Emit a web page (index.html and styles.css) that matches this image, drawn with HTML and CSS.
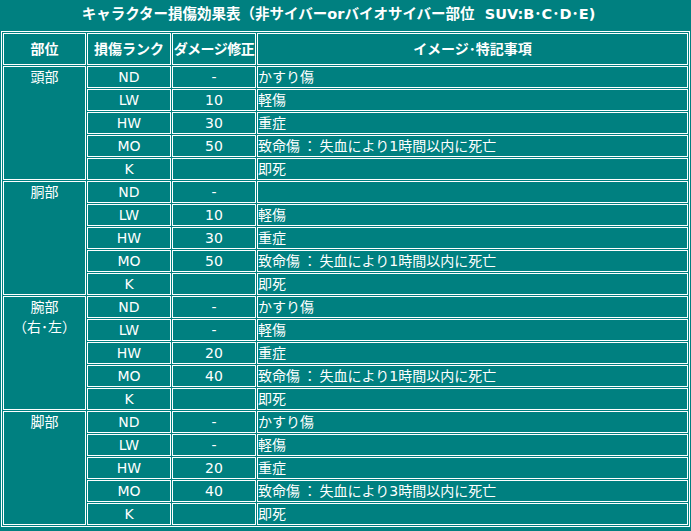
FILE: index.html
```html
<!DOCTYPE html>
<html lang="ja">
<head>
<meta charset="utf-8">
<title>キャラクター損傷効果表</title>
<link rel="stylesheet" href="styles.css">
</head>
<body>
<div class="title">キャラクター損傷効果表（非サイバーorバイオサイバー部位&nbsp;&nbsp;SUV:B･C･D･E)</div>
<table class="dmg">
  <thead>
    <tr>
      <th class="c1">部位</th>
      <th class="c2">損傷ランク</th>
      <th class="c3">ダメージ修正</th>
      <th class="c4">イメージ･特記事項</th>
    </tr>
  </thead>
  <tbody>
    <tr><td class="part" rowspan="5">頭部</td><td class="ctr">ND</td><td class="ctr">-</td><td class="note">かすり傷</td></tr>
    <tr><td class="ctr">LW</td><td class="ctr">10</td><td class="note">軽傷</td></tr>
    <tr><td class="ctr">HW</td><td class="ctr">30</td><td class="note">重症</td></tr>
    <tr><td class="ctr">MO</td><td class="ctr">50</td><td class="note">致命傷<span class="fw">：</span>失血により1時間以内に死亡</td></tr>
    <tr><td class="ctr">K</td><td class="ctr"></td><td class="note">即死</td></tr>

    <tr><td class="part" rowspan="5">胴部</td><td class="ctr">ND</td><td class="ctr">-</td><td class="note"></td></tr>
    <tr><td class="ctr">LW</td><td class="ctr">10</td><td class="note">軽傷</td></tr>
    <tr><td class="ctr">HW</td><td class="ctr">30</td><td class="note">重症</td></tr>
    <tr><td class="ctr">MO</td><td class="ctr">50</td><td class="note">致命傷<span class="fw">：</span>失血により1時間以内に死亡</td></tr>
    <tr><td class="ctr">K</td><td class="ctr"></td><td class="note">即死</td></tr>

    <tr><td class="part" rowspan="5">腕部<br>（右･左）</td><td class="ctr">ND</td><td class="ctr">-</td><td class="note">かすり傷</td></tr>
    <tr><td class="ctr">LW</td><td class="ctr">-</td><td class="note">軽傷</td></tr>
    <tr><td class="ctr">HW</td><td class="ctr">20</td><td class="note">重症</td></tr>
    <tr><td class="ctr">MO</td><td class="ctr">40</td><td class="note">致命傷<span class="fw">：</span>失血により1時間以内に死亡</td></tr>
    <tr><td class="ctr">K</td><td class="ctr"></td><td class="note">即死</td></tr>

    <tr><td class="part" rowspan="5">脚部</td><td class="ctr">ND</td><td class="ctr">-</td><td class="note">かすり傷</td></tr>
    <tr><td class="ctr">LW</td><td class="ctr">-</td><td class="note">軽傷</td></tr>
    <tr><td class="ctr">HW</td><td class="ctr">20</td><td class="note">重症</td></tr>
    <tr><td class="ctr">MO</td><td class="ctr">40</td><td class="note">致命傷<span class="fw">：</span>失血により3時間以内に死亡</td></tr>
    <tr><td class="ctr">K</td><td class="ctr"></td><td class="note">即死</td></tr>
  </tbody>
</table>
</body>
</html>
```

FILE: styles.css
```css
html, body {
  margin: 0;
  padding: 0;
  background: #008080;
}
body {
  padding: 0 1px;
  color: #ffffff;
  font-family: "DejaVu Sans", "Noto Sans CJK JP", sans-serif;
  font-size: 14px;
}
.title {
  height: 31px;
  line-height: 28px;
  font-size: 14.5px;
  text-align: center;
  font-weight: bold;
  white-space: nowrap;
  padding-right: 14px;
}
.dmg {
  width: 100%;
  table-layout: fixed;
  border-collapse: separate;
  border-spacing: 1px;
  border: 1px solid #ffffff;
}
.dmg th,
.dmg td {
  box-sizing: border-box;
  border: 1px solid #ffffff;
  padding: 0;
  white-space: nowrap;
  line-height: 20px;
}
.dmg th {
  height: 32px;
  font-weight: bold;
  text-align: center;
  vertical-align: middle;
}
.c1 { width: 83px; }
.c2 { width: 84px; }
.c3 { width: 84px; letter-spacing: -0.5px; }
.dmg td {
  height: 22px;
}
.part {
  text-align: center;
  vertical-align: top;
}
.ctr {
  text-align: center;
}
.note {
  text-align: left;
  padding-left: 2px;
}
.fw {
  display: inline-block;
  width: 1.4em;
  text-align: center;
}
```
